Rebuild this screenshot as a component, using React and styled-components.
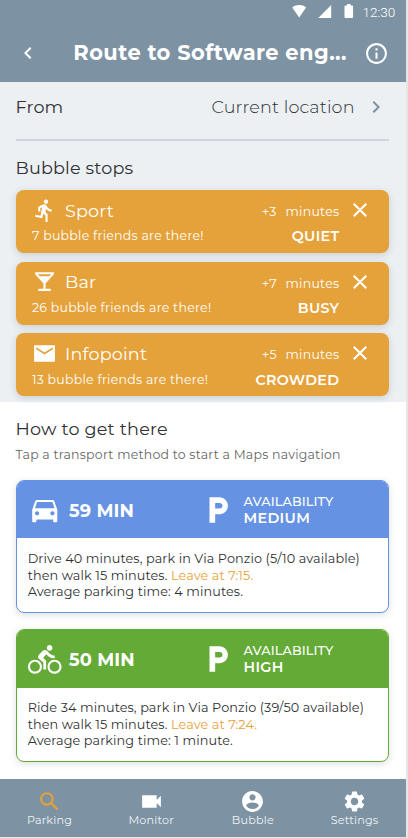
import React from "react";
import styled, { createGlobalStyle } from "styled-components";

const c = {
  slate: "#7d92a3",
  pale: "#ecf0f3",
  amber: "#e6a23a",
  ink: "#2f3133",
  blue: "#6592e3",
  green: "#64aa37",
};

const GlobalStyle = createGlobalStyle`
  * { box-sizing: border-box; }
  body { margin: 0; background: #e5e5e5; font-family: Montserrat, Inter, "Liberation Sans", sans-serif; color: ${c.ink}; }
`;

const Screen = styled.div`
  width: 406px;
  height: 837px;
  display: flex;
  flex-direction: column;
  background: #fff;
  overflow: hidden;
`;

/* Text run whose trailing letter gap does not affect alignment */
const Text = styled.span`
  display: inline-block;
  white-space: nowrap;
  font-size: ${(p) => p.$size || 18}px;
  font-weight: ${(p) => p.$weight || 400};
  letter-spacing: ${(p) => p.$track || 0}px;
  margin-right: ${(p) => -(p.$track || 0)}px;
`;

const Glyph = styled.svg`
  display: block;
  flex: none;
  width: ${(p) => p.$size || 24}px;
  height: ${(p) => p.$size || 24}px;
  fill: ${(p) => p.$color || "#fff"};
`;

const paths = {
  back: "M15.41 7.41L14 6l-6 6 6 6 1.41-1.41L10.83 12z",
  next: "M8.59 16.59L10 18l6-6-6-6-1.41 1.41L13.17 12z",
  info: "M11 7h2v2h-2zm0 4h2v6h-2zm1-9C6.48 2 2 6.48 2 12s4.48 10 10 10 10-4.48 10-10S17.52 2 12 2zm0 18c-4.41 0-8-3.59-8-8s3.59-8 8-8 8 3.59 8 8-3.59 8-8 8z",
  close: "M19 6.41L17.59 5 12 10.59 6.41 5 5 6.41 10.59 12 5 17.59 6.41 19 12 13.41 17.59 19 19 17.59 13.41 12z",
  run: "M13.49 5.48c1.1 0 2-.9 2-2s-.9-2-2-2-2 .9-2 2 .9 2 2 2zm-3.6 13.9l1-4.4 2.1 2v6h2v-7.5l-2.1-2 .6-3c1.3 1.5 3.3 2.5 5.5 2.5v-2c-1.9 0-3.5-1-4.3-2.4l-1-1.6c-.4-.6-1-1-1.7-1-.3 0-.5.1-.8.1l-5.2 2.2v4.7h2v-3.4l1.8-.7-1.6 8.1-4.9-1-.4 2 7 1.4z",
  bar: "M21 5V3H3v2l8 9v5H6v2h12v-2h-5v-5l8-9zM7.43 7L5.66 5h12.69l-1.78 2H7.43z",
  mail: "M22 4H2v16h20V4zm-2 4l-8 5-8-5V6l8 5 8-5v2z",
  car: "M18.92 6.01C18.72 5.42 18.16 5 17.5 5h-11c-.66 0-1.21.42-1.42 1.01L3 12v8c0 .55.45 1 1 1h1c.55 0 1-.45 1-1v-1h12v1c0 .55.45 1 1 1h1c.55 0 1-.45 1-1v-8l-2.08-5.99zM6.5 16c-.83 0-1.5-.67-1.5-1.5S5.67 13 6.5 13s1.5.67 1.5 1.5S7.33 16 6.5 16zm11 0c-.83 0-1.5-.67-1.5-1.5s.67-1.5 1.5-1.5 1.5.67 1.5 1.5-.67 1.5-1.5 1.5zM5 11l1.5-4.5h11L19 11H5z",
  bike: "M15.5 5.5c1.1 0 2-.9 2-2s-.9-2-2-2-2 .9-2 2 .9 2 2 2zM5 12c-2.8 0-5 2.2-5 5s2.2 5 5 5 5-2.2 5-5-2.2-5-5-5zm0 8.5c-1.9 0-3.5-1.6-3.5-3.5s1.6-3.5 3.5-3.5 3.5 1.6 3.5 3.5-1.6 3.5-3.5 3.5zm5.8-10l2.4-2.4.8.8c1.3 1.3 3 2.1 5.1 2.1V9c-1.5 0-2.7-.6-3.6-1.5l-1.9-1.9c-.5-.4-1-.6-1.6-.6s-1.1.2-1.4.6L7.8 8.4c-.4.4-.6.9-.6 1.4 0 .6.2 1.1.6 1.4L11 14v5h2v-6.2l-2.2-2.3zM19 12c-2.8 0-5 2.2-5 5s2.2 5 5 5 5-2.2 5-5-2.2-5-5-5zm0 8.5c-1.9 0-3.5-1.6-3.5-3.5s1.6-3.5 3.5-3.5 3.5 1.6 3.5 3.5-1.6 3.5-3.5 3.5z",
  parking: "M13 3H6v18h4v-6h3c3.31 0 6-2.69 6-6s-2.69-6-6-6zm.2 8H10V7h3.2c1.1 0 2 .9 2 2s-.9 2-2 2z",
  search: "M15.5 14h-.79l-.28-.27C15.41 12.59 16 11.11 16 9.5 16 5.91 13.09 3 9.5 3S3 5.91 3 9.5 5.91 16 9.5 16c1.61 0 3.09-.59 4.23-1.57l.27.28v.79l5 4.99L20.49 19l-4.99-5zm-6 0C7.01 14 5 11.99 5 9.5S7.01 5 9.5 5 14 7.01 14 9.5 11.99 14 9.5 14z",
  video: "M17 10.5V6H3v12h14v-4.5l4 4v-11l-4 4z",
  account: "M12 2C6.48 2 2 6.48 2 12s4.48 10 10 10 10-4.48 10-10S17.52 2 12 2zm0 3c1.66 0 3 1.34 3 3s-1.34 3-3 3-3-1.34-3-3 1.34-3 3-3zm0 14.2c-2.5 0-4.71-1.28-6-3.22.03-1.99 4-3.08 6-3.08 1.99 0 5.97 1.09 6 3.08-1.29 1.94-3.5 3.22-6 3.22z",
  gear: "M19.14 12.94c.04-.3.06-.61.06-.94 0-.32-.02-.64-.07-.94l2.03-1.58c.18-.14.23-.41.12-.61l-1.92-3.32c-.12-.22-.37-.29-.59-.22l-2.39.96c-.5-.38-1.03-.7-1.62-.94l-.36-2.54c-.04-.24-.24-.41-.48-.41h-3.84c-.24 0-.43.17-.47.41l-.36 2.54c-.59.24-1.13.57-1.62.94l-2.39-.96c-.22-.08-.47 0-.59.22L2.74 8.87c-.12.21-.08.47.12.61l2.03 1.58c-.05.3-.09.63-.09.94s.02.64.07.94l-2.03 1.58c-.18.14-.23.41-.12.61l1.92 3.32c.12.22.37.29.59.22l2.39-.96c.5.38 1.03.7 1.62.94l.36 2.54c.05.24.24.41.48.41h3.84c.24 0 .44-.17.47-.41l.36-2.54c.59-.24 1.13-.56 1.62-.94l2.39.96c.22.08.47 0 .59-.22l1.92-3.32c.12-.22.07-.47-.12-.61l-2.01-1.58zM12 15.6c-1.98 0-3.6-1.62-3.6-3.6s1.62-3.6 3.6-3.6 3.6 1.62 3.6 3.6-1.62 3.6-3.6 3.6z",
};

const Icon = ({ name, size, color }) => (
  <Glyph viewBox="0 0 24 24" $size={size} $color={color} aria-hidden="true">
    <path d={paths[name]} />
  </Glyph>
);

const Header = styled.header`
  flex: none;
  height: 82px;
  background: ${c.slate};
  color: #fff;
`;

const StatusBar = styled.div`
  height: 24px;
  display: flex;
  justify-content: flex-end;
  padding-right: 10px;
`;

const StatusIcons = styled.svg`
  width: 64px;
  height: 24px;
  fill: #fff;
`;

const Clock = styled.time`
  width: 33.5px;
  margin-left: 7px;
  font: 300 13.5px/24px Roboto, sans-serif;
`;

const TitleBar = styled.div`
  height: 58px;
  display: flex;
  align-items: center;
  padding: 0 17px 0 16px;
`;

const Title = styled.h1`
  flex: 1;
  margin: 0;
  padding-left: 33.3px;
  font-size: 21px;
  line-height: 58px;
`;

const Planner = styled.section`
  flex: none;
  height: 319.5px;
  padding: 0 17px 0 15.5px;
  background: ${c.pale};
`;

const FromRow = styled.div`
  height: 57px;
  padding-bottom: 8px;
  padding-right: 1px;
  display: flex;
  align-items: center;
`;

const Origin = styled.div`
  margin-left: auto;
  display: flex;
  align-items: center;
  gap: 9.5px;
`;

const Divider = styled.hr`
  height: 2px;
  margin: 0 0 15px;
  border: 0;
  background: #cdd6de;
`;

const Heading = styled.h2`
  margin: 0;
  line-height: 24px;
  font-size: 17.6px;
`;

const StopList = styled.div`
  margin-top: 10px;
  display: flex;
  flex-direction: column;
  gap: 8.6px;
`;

const StopCard = styled.article`
  height: 63px;
  padding: 7px 17px 0 16.5px;
  border-radius: 8px;
  background: ${c.amber};
  box-shadow: 0 2px 7px rgba(60, 75, 95, 0.2);
  color: #fff;
`;

const StopTop = styled.div`
  height: 24px;
  display: grid;
  grid-template-columns: 33px 1fr 23.5px 53.5px 33px;
  align-items: center;
  line-height: 23px;
`;

const Delay = styled.div`
  padding-top: 2px;
`;

const CloseButton = styled.button`
  justify-self: end;
  padding: 0;
  border: 0;
  background: none;
`;

const StopBottom = styled.div`
  margin-top: 5.4px;
  padding-right: 33px;
  display: flex;
  justify-content: space-between;
  line-height: 19px;
`;

const Status = styled.div`
  line-height: 20.5px;
`;

const Routes = styled.section`
  flex: 1;
  padding: 15.7px 17px 0 15.5px;
`;

const Hint = styled.p`
  margin: 4.5px 0 16.2px;
  height: 18px;
  line-height: 18px;
  font-size: 12.5px;
  color: #666;
`;

const RouteCard = styled.article`
  height: 133px;
  margin-bottom: 16.2px;
  border: 1px solid ${(p) => p.$tone};
  border-radius: 8px;
  overflow: hidden;
  background: #fff;
  box-shadow: 0 2px 7px rgba(60, 75, 95, 0.18);
`;

const RouteHead = styled.div`
  height: 57.5px;
  padding: 1px 0 0 11.5px;
  display: grid;
  grid-template-columns: 41px 131.5px 43px 1fr;
  align-items: center;
  background: ${(p) => p.$tone};
  color: #fff;
`;

const Availability = styled.div`
  display: flex;
  flex-direction: column;
  line-height: 16.5px;
`;

const RouteBody = styled.p`
  margin: 0;
  padding: 12.8px 0 0 11.2px;
  font-size: 12.8px;
  line-height: 16.5px;
  letter-spacing: 0.1px;
  white-space: nowrap;
`;

const Leave = styled.span`
  color: ${c.amber};
`;

const Nav = styled.nav`
  flex: none;
  height: 58px;
  padding: 9.5px 0.7px 0 0;
  display: grid;
  grid-template-columns: repeat(4, 101.7px);
  justify-content: end;
  background: ${c.slate};
`;

const NavItem = styled.div`
  display: flex;
  flex-direction: column;
  align-items: center;
  line-height: 13px;
  color: #eef2f5;
`;

const stops = [
  { icon: "run", name: "Sport", note: "7 bubble friends are there!", delay: "+3", status: "QUIET" },
  { icon: "bar", name: "Bar", note: "26 bubble friends are there!", delay: "+7", status: "BUSY" },
  { icon: "mail", name: "Infopoint", note: "13 bubble friends are there!", delay: "+5", status: "CROWDED" },
];

const routes = [
  {
    icon: "car", tone: c.blue, time: "59 MIN", level: "MEDIUM",
    first: "Drive 40 minutes, park in Via Ponzio (5/10 available)",
    leave: "Leave at 7:15.",
    last: "Average parking time: 4 minutes.",
  },
  {
    icon: "bike", tone: c.green, time: "50 MIN", level: "HIGH",
    first: "Ride 34 minutes, park in Via Ponzio (39/50 available)",
    leave: "Leave at 7:24.",
    last: "Average parking time: 1 minute.",
  },
];

const tabs = [
  { icon: "search", label: "Parking", color: c.amber },
  { icon: "video", label: "Monitor" },
  { icon: "account", label: "Bubble" },
  { icon: "gear", label: "Settings" },
];

export default function App() {
  return (
    <>
      <GlobalStyle />
      <Screen>
        <Header>
          <StatusBar>
            <StatusIcons viewBox="0 0 64 24">
              <path d="M.3 7.5C4.2 4.3 10.2 4.3 14.1 7.5L7.2 17.5z" />
              <path d="M39.2 5v13H26.3z" />
              <path d="M55 4h3.6v1.4h1.5q1 0 1 1v10.6q0 1-1 1h-6.6q-1 0-1-1V6.4q0-1 1-1H55z" />
            </StatusIcons>
            <Clock>12:30</Clock>
          </StatusBar>
          <TitleBar>
            <Icon name="back" />
            <Title><Text $size={21} $weight={700} $track={0.42}>Route to Software eng...</Text></Title>
            <Icon name="info" size={25} />
          </TitleBar>
        </Header>

        <Planner>
          <FromRow>
            <Text $size={17.6} $track={0.1}>From</Text>
            <Origin>
              <Text $size={17.6} $weight={300} $track={0.13}>Current location</Text>
              <Icon name="next" color={c.slate} />
            </Origin>
          </FromRow>
          <Divider />
          <Heading><Text $size={17.6} $track={0.16}>Bubble stops</Text></Heading>
          <StopList>
            {stops.map((s) => (
              <StopCard key={s.name}>
                <StopTop>
                  <Icon name={s.icon} size={25} />
                  <Text $size={17.6} $track={0.16}>{s.name}</Text>
                  <Delay><Text $size={12.5} $track={0.2}>{s.delay}</Text></Delay>
                  <Delay><Text $size={12.5} $track={0.28}>minutes</Text></Delay>
                  <CloseButton aria-label={`Remove ${s.name}`}><Icon name="close" /></CloseButton>
                </StopTop>
                <StopBottom>
                  <Text $size={12.5} $track={0.26}>{s.note}</Text>
                  <Status><Text $size={14.3} $weight={600} $track={0.3}>{s.status}</Text></Status>
                </StopBottom>
              </StopCard>
            ))}
          </StopList>
        </Planner>

        <Routes>
          <Heading><Text $size={17.6} $track={0.2}>How to get there</Text></Heading>
          <Hint><Text $size={12.5} $track={0.23}>Tap a transport method to start a Maps navigation</Text></Hint>
          {routes.map((r) => (
            <RouteCard key={r.icon} $tone={r.tone}>
              <RouteHead $tone={r.tone}>
                <Icon name={r.icon} size={33.5} />
                <Text $size={17.8} $weight={700} $track={0.15}>{r.time}</Text>
                <Icon name="parking" size={34} />
                <Availability>
                  <Text $size={12.8} $weight={500} $track={0.1}>AVAILABILITY</Text>
                  <Text $size={14.3} $weight={600} $track={0.35}>{r.level}</Text>
                </Availability>
              </RouteHead>
              <RouteBody>
                {r.first}
                <br />
                then walk 15 minutes. <Leave>{r.leave}</Leave>
                <br />
                {r.last}
              </RouteBody>
            </RouteCard>
          ))}
        </Routes>

        <Nav>
          {tabs.map((t) => (
            <NavItem key={t.label}>
              <Icon name={t.icon} size={25} color={t.color} />
              <Text $size={11.2} $track={0.2}>{t.label}</Text>
            </NavItem>
          ))}
        </Nav>
      </Screen>
    </>
  );
}
